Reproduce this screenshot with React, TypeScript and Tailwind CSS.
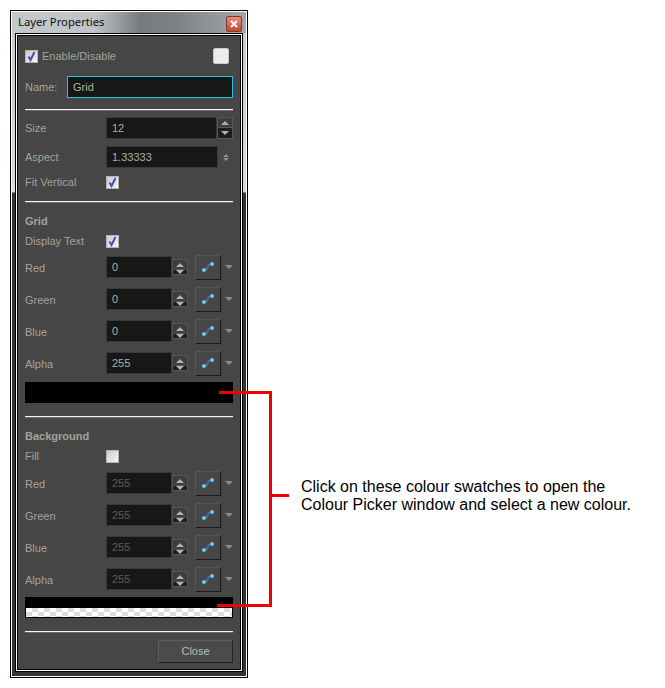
const labelText = "text-[11px] leading-[14px] text-[#a3a39a]";

function Sep({ className = "" }: { className?: string }) {
  return <div className={`h-[2px] border-t border-[#f4f4f4] bg-[#6a6a6a] ${className}`} />;
}

function Check({ on = true }: { on?: boolean }) {
  return (
    <div className="flex h-[13px] w-[13px] flex-none items-center justify-center border border-[#b4b4b4] bg-[linear-gradient(135deg,#c9ccd4,#f4f4f4)]">
      {on && (
        <svg width="11" height="11" viewBox="0 0 11 11">
          <path d="M2.5 5.5 L4.5 9 L8.5 1" fill="none" stroke="#3f55a8" strokeWidth="2" />
        </svg>
      )}
    </div>
  );
}

function Spin() {
  return (
    <div className="flex w-[16px] flex-none flex-col border border-[#575757]">
      <div className="flex h-[10px] items-center justify-center border-b border-[#575757] bg-[#3d3d3d]">
        <div className="h-0 w-0 border-x-[4px] border-b-[4px] border-x-transparent border-b-[#b0b0b0]" />
      </div>
      <div className="flex flex-1 items-center justify-center bg-[#1e1e1e]">
        <div className="h-0 w-0 border-x-[4px] border-t-[4px] border-x-transparent border-t-[#b0b0b0]" />
      </div>
    </div>
  );
}

function Field({ value, disabled = false, grow = false }: { value: string; disabled?: boolean; grow?: boolean }) {
  return (
    <div
      className={`flex h-[22px] items-center border border-[#3a3a3a] bg-[#171717] pt-[1px] pl-[5px] text-[11px] ${
        disabled ? "text-[#5c5c5c]" : "text-[#a8b0a4]"
      } ${grow ? "flex-1" : "w-[66px]"}`}
    >
      {value}
    </div>
  );
}

function ColourRow({ label, value, disabled = false }: { label: string; value: string; disabled?: boolean }) {
  return (
    <div className="flex h-[32px] items-center">
      <div className={`w-[81px] pt-[1px] ${labelText}`}>{label}</div>
      <Field value={value} disabled={disabled} />
      <Spin />
      <div className="ml-[7px] flex h-[25px] w-[26px] items-center justify-center border border-[#555555] border-r-[#1c1c1c] border-b-[#1c1c1c] bg-[#474747]">
        <svg width="14" height="12" viewBox="0 0 14 12">
          <path d="M3 9 H4.5 C7 9 6.5 3 9 3 H11" fill="none" stroke="#2a7fc0" strokeWidth="1.5" />
          <circle cx="3" cy="9" r="2" fill="#7cc4ee" />
          <circle cx="11" cy="3" r="2" fill="#7cc4ee" />
        </svg>
      </div>
      <div className="ml-[4px] h-0 w-0 border-x-[4px] border-t-[4px] border-x-transparent border-t-[#8a8a8a]" />
    </div>
  );
}

function App() {
  return (
    <div className="relative flex h-[688px] w-[665px] items-start bg-white pt-[10px] pl-[10px] font-['Liberation_Sans',Arial,sans-serif]">
      {/* window */}
      <div className="h-[668px] w-[238px] flex-none border border-black">
        <div className="flex h-full flex-col border border-white bg-[linear-gradient(to_bottom,#c4c8cc_0,#d8dadc_180px,#30363b_181px,#30363b_100%)] px-[3px] pb-[4px]">
          <div className="-mx-[3px] flex h-[21px] flex-none items-center justify-between bg-[linear-gradient(to_right,#c3c8cc_0,#c0c4c8_35%,#767b80_55%,#7d8287_70%,#a4a8ac_100%)] pr-[4px] pl-[6px]">
            <span className="font-['Noto_Sans',sans-serif] text-[11.25px] text-[#101010]">Layer Properties</span>
            <div className="mt-[3px] flex h-[16px] w-[16px] items-center justify-center rounded-[2px] border border-[#7e3a2c] bg-[linear-gradient(to_bottom,#e58d78,#c8492f)]">
              <svg width="10" height="8" viewBox="0 0 10 8">
                <path d="M2 1 L8 7 M8 1 L2 7" stroke="#fff" strokeWidth="2" />
              </svg>
            </div>
          </div>

          <div className="flex-1 border border-black">
            <div className="h-full border border-white">
              <div className="h-full border border-black bg-[#464646] px-[7px] pt-[12px]">
                <div className="flex h-[16px] items-center">
                  <Check />
                  <span className={`ml-[4px] flex-1 ${labelText}`}>Enable/Disable</span>
                  <div className="mr-[4px] h-[16px] w-[16px] rounded-[2px] border border-[#c8c8c8] bg-[#ececec]" />
                </div>

                <div className="mt-[12px] flex h-[22px] items-center">
                  <span className={`w-[42px] ${labelText}`}>Name:</span>
                  <div className="flex h-[22px] flex-1 items-center border border-[#1fc4e4] bg-[#171717] pt-[1px] pl-[5px] text-[11px] text-[#aeb89c]">
                    Grid
                  </div>
                </div>

                <Sep className="mt-[11px]" />

                <div className="mt-[6px] flex h-[22px]">
                  <div className={`flex w-[81px] items-center ${labelText}`}>Size</div>
                  <Field value="12" grow />
                  <Spin />
                </div>

                <div className="mt-[7px] flex h-[22px]">
                  <div className={`flex w-[81px] items-center ${labelText}`}>Aspect</div>
                  <Field value="1.33333" grow />
                  <div className="flex w-[15px] flex-none flex-col items-center justify-center gap-[1px]">
                    <div className="h-0 w-0 border-x-[3px] border-b-[3px] border-x-transparent border-b-[#8f8f8f]" />
                    <div className="h-0 w-0 border-x-[3px] border-t-[3px] border-x-transparent border-t-[#8f8f8f]" />
                  </div>
                </div>

                <div className="mt-[7px] flex h-[14px] items-center">
                  <span className={`w-[81px] ${labelText}`}>Fit Vertical</span>
                  <Check />
                </div>

                <Sep className="mt-[12px]" />

                <div className={`mt-[11px] font-bold ${labelText}`}>Grid</div>
                <div className="mt-[6px] flex h-[14px] items-center">
                  <span className={`w-[81px] ${labelText}`}>Display Text</span>
                  <Check />
                </div>

                <div className="mt-[3px]">
                  <ColourRow label="Red" value="0" />
                  <ColourRow label="Green" value="0" />
                  <ColourRow label="Blue" value="0" />
                  <ColourRow label="Alpha" value="255" />
                </div>

                <div className="mt-[3px] h-[21px] bg-black" />

                <Sep className="mt-[13px]" />

                <div className={`mt-[11px] font-bold ${labelText}`}>Background</div>
                <div className="mt-[6px] flex h-[14px] items-center">
                  <span className={`w-[81px] ${labelText}`}>Fill</span>
                  <Check on={false} />
                </div>

                <div className="mt-[4px]">
                  <ColourRow label="Red" value="255" disabled />
                  <ColourRow label="Green" value="255" disabled />
                  <ColourRow label="Blue" value="255" disabled />
                  <ColourRow label="Alpha" value="255" disabled />
                </div>

                <div className="mt-[2px] border border-black">
                  <div className="h-[10px] bg-black" />
                  <div className="h-[9px] bg-white bg-[repeating-conic-gradient(#dadada_0_25%,#ffffff_0_50%)] bg-[length:12px_8px]" />
                </div>

                <Sep className="mt-[13px]" />

                <div className="mt-[7px] flex justify-end">
                  <div className="flex h-[23px] w-[75px] items-center justify-center border border-[#5c5c5c] border-r-[#222222] border-b-[#222222] bg-[#4b4b4b] text-[11px] text-[#b8bcb4]">
                    Close
                  </div>
                </div>
              </div>
            </div>
          </div>
        </div>
      </div>

      {/* callout */}
      <p className="mt-[468px] ml-[53px] text-[16px] leading-[18px] whitespace-nowrap text-black">
        Click on these colour swatches to open the
        <br />
        Colour Picker window and select a new colour.
      </p>

      {/* red bracket */}
      <div className="absolute top-[391px] left-[219px] h-[3px] w-[52px] bg-[#f00000]" />
      <div className="absolute top-[604px] left-[217px] h-[3px] w-[54px] bg-[#f00000]" />
      <div className="absolute top-[391px] left-[269px] h-[216px] w-[3px] bg-[#f00000]" />
      <div className="absolute top-[494px] left-[271px] h-[3px] w-[18px] bg-[#f00000]" />
    </div>
  );
}

export default App;
